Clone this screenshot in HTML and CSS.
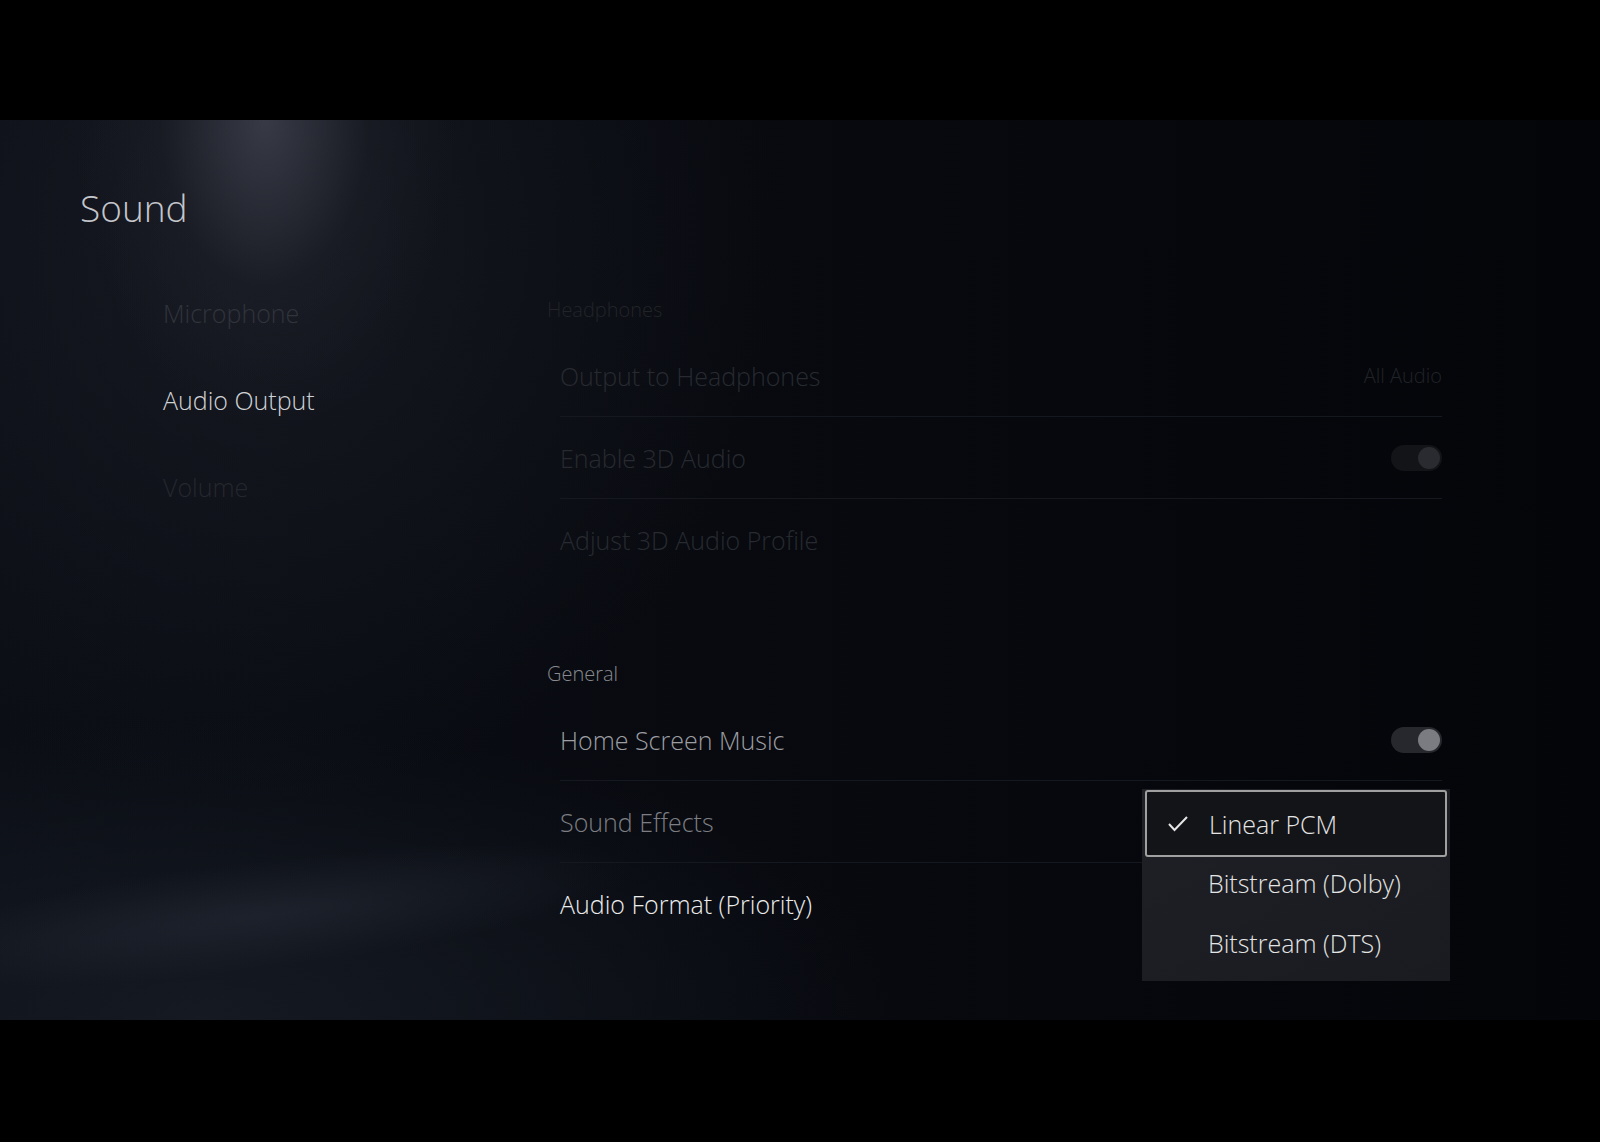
FILE: index.html
```html
<!DOCTYPE html>
<html lang="en">

<head>
    <meta charset="UTF-8">
    <meta name="viewport" content="width=device-width, initial-scale=1.0">
    <title>Settings - Sound</title>
    <link rel="stylesheet" href="styles.css">
</head>

<body>
    <div class="letterbox"></div>

    <main class="settings">
        <h1 class="page-title">Sound</h1>

        <div class="layout">
            <!-- left menu -->
            <nav class="side-nav">
                <div class="nav-item dim">Microphone</div>
                <div class="nav-item active">Audio Output</div>
                <div class="nav-item faint">Volume</div>
            </nav>

            <section class="options">
                <div class="group inactive">
                    <h2 class="group-label">Headphones</h2>
                    <ul class="rows">
                        <li class="row">
                            <span class="row-label">Output to Headphones</span>
                            <span class="row-value">All Audio</span>
                        </li>
                        <li class="row">
                            <span class="row-label">Enable 3D Audio</span>
                            <span class="switch"><span class="knob"></span></span>
                        </li>
                        <li class="row">
                            <span class="row-label">Adjust 3D Audio Profile</span>
                        </li>
                    </ul>
                </div>

                <div class="group general">
                    <h2 class="group-label">General</h2>
                    <ul class="rows">
                        <li class="row">
                            <span class="row-label music">Home Screen Music</span>
                            <span class="switch"><span class="knob"></span></span>
                        </li>
                        <li class="row">
                            <span class="row-label effects">Sound Effects</span>
                        </li>
                        <li class="row focused">
                            <span class="row-label current">Audio Format (Priority)</span>

                            <!-- open dropdown -->
                            <div class="dropdown">
                                <div class="choice selected">
                                    <svg class="check" width="20" height="16" viewBox="0 0 20 16">
                                        <polyline points="1,8 6.5,14 19,1" fill="none" stroke="#e6e6e6" stroke-width="2" />
                                    </svg>
                                    <span>Linear PCM</span>
                                </div>
                                <div class="choice">Bitstream (Dolby)</div>
                                <div class="choice">Bitstream (DTS)</div>
                            </div>
                        </li>
                    </ul>
                </div>
            </section>
        </div>
    </main>

    <div class="letterbox"></div>
</body>

</html>
```

FILE: styles.css
```css
body {
    margin: 0;
    padding: 0;
    background-color: #000;
    font-family: "Open Sans", "Noto Sans", sans-serif;
    font-weight: 300;
    overflow: hidden;
}

.letterbox {
    height: 120px;
    background-color: #000;
}

.settings {
    position: relative;
    height: 900px;
    overflow: hidden;
    background:
        radial-gradient(ellipse 190px 300px at 265px 0, rgba(80, 82, 96, 0.6), rgba(40, 42, 52, 0.25) 55%, transparent 100%),
        radial-gradient(ellipse 520px 560px at 260px 120px, rgba(30, 33, 42, 0.6), transparent 100%),
        radial-gradient(ellipse 700px 300px at 200px 900px, rgba(22, 27, 36, 0.9), transparent 100%),
        linear-gradient(to right, #0b0e15 0%, #080a10 45%, #040509 100%);
}

/* light streak bottom left */
.settings::before {
    content: "";
    position: absolute;
    left: -120px;
    top: 740px;
    width: 760px;
    height: 110px;
    background: radial-gradient(ellipse at center, rgba(40, 46, 58, 0.5), transparent 70%);
    transform: rotate(-7deg);
}

.page-title {
    position: relative;
    margin: 0;
    padding: 64px 0 0 80px;
    font-size: 37px;
    line-height: 48px;
    font-weight: 300;
    color: #c4c6cb;
}

.layout {
    position: relative;
    display: grid;
    grid-template-columns: 384px 895px;
    padding-left: 163px;
}

.side-nav {
    padding-top: 38px;
}

.nav-item {
    font-size: 25px;
    line-height: 87px;
    color: #30343c;
}

.nav-item.active {
    color: #cfd1d5;
}

.nav-item.faint {
    color: #24272e;
}

.options {
    padding-top: 65px;
}

.group-label {
    margin: 0 0 12px;
    font-size: 20px;
    line-height: 26px;
    font-weight: 300;
    color: #888a8f;
}

.group.inactive .group-label {
    color: #212429;
}

.general {
    padding-top: 81px;
}

.rows {
    list-style: none;
    margin: 0 0 0 13px;
    padding: 0;
}

.row {
    position: relative;
    display: flex;
    align-items: center;
    justify-content: space-between;
    height: 81px;
    border-bottom: 1px solid #15181e;
}

.row:last-child {
    border-bottom: none;
}

.row-label {
    font-size: 25px;
    color: #272a30;
}

.row-value {
    font-size: 20px;
    color: #202328;
}

.row-label.music {
    color: #9c9ea2;
}

.row-label.effects {
    color: #7c7e83;
}

.row-label.current {
    color: #ececec;
}

.switch {
    display: flex;
    align-items: center;
    justify-content: flex-end;
    width: 51px;
    height: 26px;
    padding: 0 2px;
    box-sizing: border-box;
    border-radius: 13px;
    background-color: #27282d;
}

.switch .knob {
    width: 22px;
    height: 22px;
    border-radius: 50%;
    background-color: #7b7c81;
}

.inactive .switch {
    background-color: #131418;
}

.inactive .switch .knob {
    background-color: #2a2b30;
}

.dropdown {
    position: absolute;
    top: -74px;
    right: -8px;
    width: 308px;
    padding: 1px 3px 8px;
    box-sizing: border-box;
    background: linear-gradient(to bottom right, #1e2025, #191b20);
}

.choice {
    display: flex;
    align-items: center;
    height: 60px;
    padding-left: 63px;
    font-size: 25px;
    color: #e4e4e4;
}

.choice.selected {
    height: 67px;
    margin-bottom: -4px;
    padding-left: 21px;
    box-sizing: border-box;
    border: 2px solid #a0a0a0;
    border-radius: 3px;
    background-color: #131418;
}

.check {
    margin-right: 21px;
}
```
